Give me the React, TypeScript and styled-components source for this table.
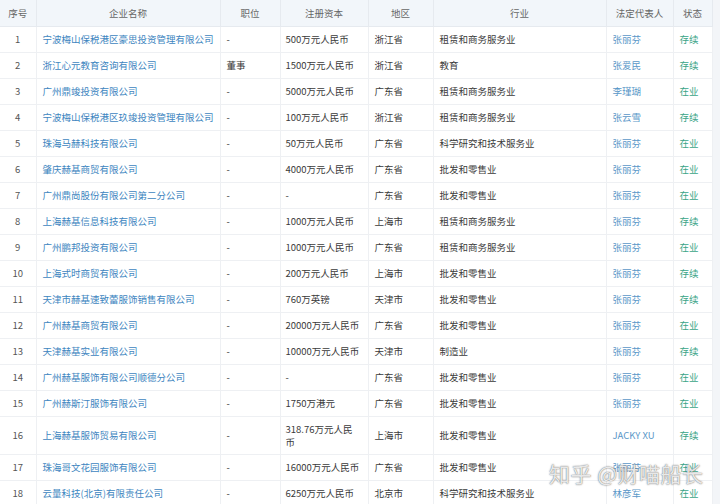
import React from "react";
import styled, { createGlobalStyle } from "styled-components";

const GlobalStyle = createGlobalStyle`
  html, body { margin: 0; padding: 0; background: #ffffff; }
  body { font-family: "Noto Sans CJK SC", "Noto Sans", sans-serif; }
`;

const Page = styled.div`
  position: relative;
  width: 720px;
  height: 504px;
  overflow: hidden;
  background: #f3f5f8;
`;

const Table = styled.table`
  width: 712px;
  table-layout: fixed;
  border-collapse: collapse;
  background: #ffffff;
  font-size: 9.5px;
  color: #333333;
`;

const HeadCell = styled.th`
  height: 26px;
  padding: 0;
  background: #f2f6fa;
  color: #666666;
  font-weight: 400;
  text-align: center;
  border-bottom: 1px solid #e6eaef;
  border-right: 1px solid #e6eaef;
  white-space: nowrap;
`;

const Row = styled.tr<{ $tall?: boolean }>`
  height: ${(p) => (p.$tall ? 38 : 26)}px;
`;

type Tone = "plain" | "link" | "person" | "status" | "index";

const toneColor: Record<Tone, string> = {
  plain: "#3a3a3a",
  link: "#3d85c0",
  person: "#5a97c8",
  status: "#3aa487",
  index: "#555555",
};

const Cell = styled.td<{ $tone?: Tone; $center?: boolean }>`
  padding: 0 0 0 6px;
  color: ${(p) => toneColor[p.$tone ?? "plain"]};
  text-align: ${(p) => (p.$center ? "center" : "left")};
  border-bottom: 1px solid #eef0f3;
  border-right: 1px solid #eef0f3;
  white-space: pre-line;
  overflow: visible;
  line-height: 13px;
  ${(p) => (p.$center ? "padding: 0;" : "")}
`;

const Capital = styled(Cell)`
  padding-left: 5px;
  white-space: pre;
`;

const Watermark = styled.div`
  position: absolute;
  left: 549px;
  top: 458px;
  font-size: 21px;
  letter-spacing: 0.5px;
  color: rgba(255, 255, 255, 0.85);
  text-shadow: 0 0 1px rgba(70, 70, 70, 0.8), 0 0 2px rgba(90, 90, 90, 0.45);
  white-space: nowrap;
  pointer-events: none;
`;

type Rec = {
  name: string;
  pos: string;
  cap: string;
  area: string;
  ind: string;
  rep: string;
  status: string;
  tall?: boolean;
};

const rows: Rec[] = [
  { name: "宁波梅山保税港区豪思投资管理有限公司", pos: "-", cap: "500万元人民币", area: "浙江省", ind: "租赁和商务服务业", rep: "张丽芬", status: "存续" },
  { name: "浙江心元教育咨询有限公司", pos: "董事", cap: "1500万元人民币", area: "浙江省", ind: "教育", rep: "张爱民", status: "存续" },
  { name: "广州鼎竣投资有限公司", pos: "-", cap: "5000万元人民币", area: "广东省", ind: "租赁和商务服务业", rep: "李瑾瑚", status: "在业" },
  { name: "宁波梅山保税港区玖竣投资管理有限公司", pos: "-", cap: "100万元人民币", area: "浙江省", ind: "租赁和商务服务业", rep: "张云雪", status: "存续" },
  { name: "珠海马赫科技有限公司", pos: "-", cap: "50万元人民币", area: "广东省", ind: "科学研究和技术服务业", rep: "张丽芬", status: "在业" },
  { name: "肇庆赫基商贸有限公司", pos: "-", cap: "4000万元人民币", area: "广东省", ind: "批发和零售业", rep: "张丽芬", status: "在业" },
  { name: "广州鼎尚股份有限公司第二分公司", pos: "-", cap: "-", area: "广东省", ind: "批发和零售业", rep: "张丽芬", status: "在业" },
  { name: "上海赫基信息科技有限公司", pos: "-", cap: "1000万元人民币", area: "上海市", ind: "租赁和商务服务业", rep: "张丽芬", status: "存续" },
  { name: "广州鹏邦投资有限公司", pos: "-", cap: "1000万元人民币", area: "广东省", ind: "租赁和商务服务业", rep: "张丽芬", status: "在业" },
  { name: "上海式时商贸有限公司", pos: "-", cap: "200万元人民币", area: "上海市", ind: "批发和零售业", rep: "张丽芬", status: "存续" },
  { name: "天津市赫基速致蕾服饰销售有限公司", pos: "-", cap: "760万英镑", area: "天津市", ind: "批发和零售业", rep: "张丽芬", status: "存续" },
  { name: "广州赫基商贸有限公司", pos: "-", cap: "20000万元人民币", area: "广东省", ind: "批发和零售业", rep: "张丽芬", status: "在业" },
  { name: "天津赫基实业有限公司", pos: "-", cap: "10000万元人民币", area: "天津市", ind: "制造业", rep: "张丽芬", status: "存续" },
  { name: "广州赫基服饰有限公司顺德分公司", pos: "-", cap: "-", area: "广东省", ind: "批发和零售业", rep: "张丽芬", status: "在业" },
  { name: "广州赫斯汀服饰有限公司", pos: "-", cap: "1750万港元", area: "广东省", ind: "批发和零售业", rep: "张丽芬", status: "在业" },
  { name: "上海赫基服饰贸易有限公司", pos: "-", cap: "318.76万元人民\n币", area: "上海市", ind: "批发和零售业", rep: "JACKY XU", status: "存续", tall: true },
  { name: "珠海哥文花园服饰有限公司", pos: "-", cap: "16000万元人民币", area: "广东省", ind: "批发和零售业", rep: "张丽芬", status: "在业" },
  { name: "云量科技(北京)有限责任公司", pos: "-", cap: "6250万元人民币", area: "北京市", ind: "科学研究和技术服务业", rep: "林彦军", status: "在业" },
];

const cols = [36, 184, 60, 88, 65, 173, 67, 39];
const heads = ["序号", "企业名称", "职位", "注册资本", "地区", "行业", "法定代表人", "状态"];

export default function App() {
  return (
    <>
      <GlobalStyle />
      <Page>
        <Table>
          <colgroup>
            {cols.map((w, i) => (
              <col key={i} style={{ width: w }} />
            ))}
          </colgroup>
          <thead>
            <tr>
              {heads.map((h) => (
                <HeadCell key={h}>{h}</HeadCell>
              ))}
            </tr>
          </thead>
          <tbody>
            {rows.map((r, i) => (
              <Row key={i} $tall={r.tall}>
                <Cell $tone="index" $center>
                  {i + 1}
                </Cell>
                <Cell $tone="link">{r.name}</Cell>
                <Cell>{r.pos}</Cell>
                <Capital>{r.cap}</Capital>
                <Cell>{r.area}</Cell>
                <Cell>{r.ind}</Cell>
                <Cell $tone="person">{r.rep}</Cell>
                <Cell $tone="status">{r.status}</Cell>
              </Row>
            ))}
          </tbody>
        </Table>
        <Watermark>知乎 @财喵船长</Watermark>
      </Page>
    </>
  );
}
